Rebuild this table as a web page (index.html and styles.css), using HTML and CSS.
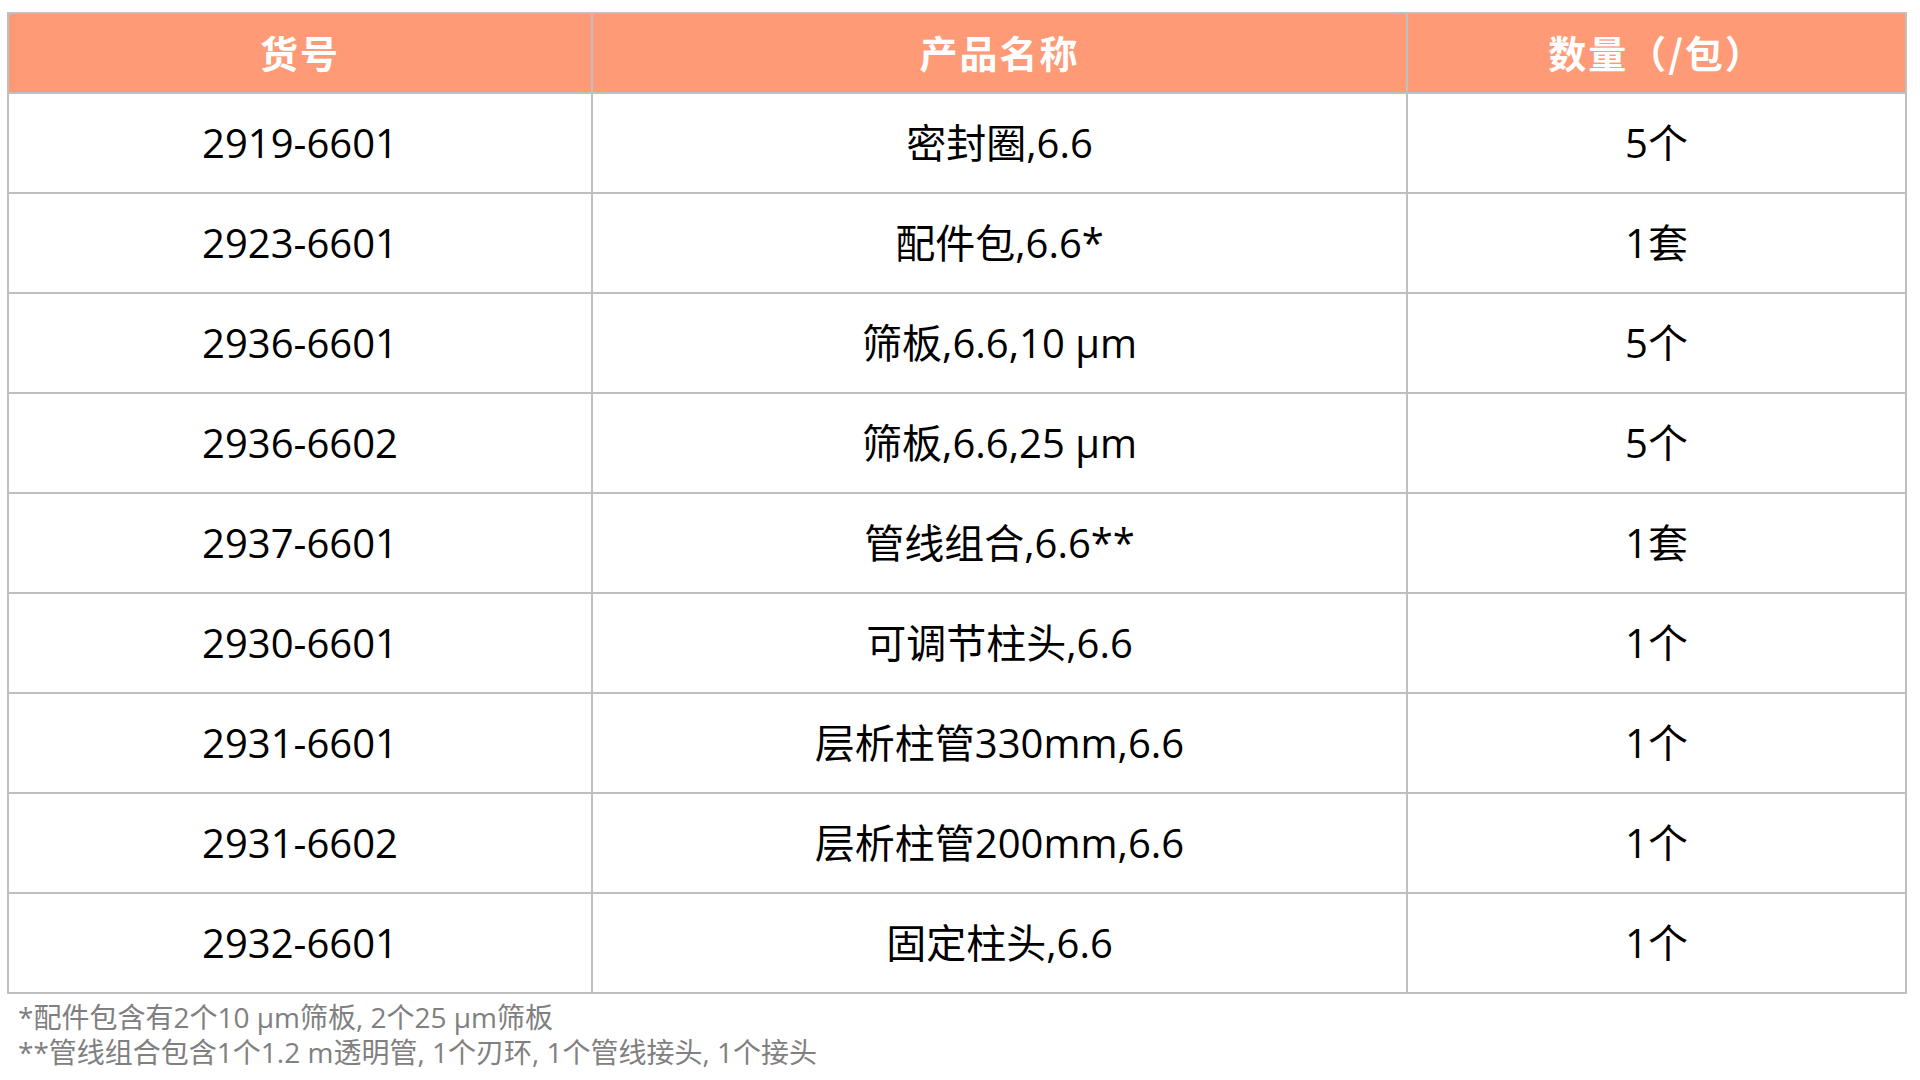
FILE: index.html
```html
<!DOCTYPE html>
<html lang="zh-CN">
<head>
<meta charset="utf-8">
<title>配件列表</title>
<link rel="stylesheet" href="styles.css">
</head>
<body>
<div class="page">
  <table class="parts">
    <colgroup>
      <col class="c1">
      <col class="c2">
      <col class="c3">
    </colgroup>
    <thead>
      <tr><th>货号</th><th>产品名称</th><th>数量（/包）</th></tr>
    </thead>
    <tbody>
      <tr><td>2919-6601</td><td>密封圈,6.6</td><td>5个</td></tr>
      <tr><td>2923-6601</td><td>配件包,6.6*</td><td>1套</td></tr>
      <tr><td>2936-6601</td><td>筛板,6.6,10 μm</td><td>5个</td></tr>
      <tr><td>2936-6602</td><td>筛板,6.6,25 μm</td><td>5个</td></tr>
      <tr><td>2937-6601</td><td>管线组合,6.6**</td><td>1套</td></tr>
      <tr><td>2930-6601</td><td>可调节柱头,6.6</td><td>1个</td></tr>
      <tr><td>2931-6601</td><td>层析柱管330mm,6.6</td><td>1个</td></tr>
      <tr><td>2931-6602</td><td>层析柱管200mm,6.6</td><td>1个</td></tr>
      <tr><td>2932-6601</td><td>固定柱头,6.6</td><td>1个</td></tr>
    </tbody>
  </table>
  <div class="notes">
    <p>*配件包含有2个10 μm筛板, 2个25 μm筛板</p>
    <p>**管线组合包含1个1.2 m透明管, 1个刃环, 1个管线接头, 1个接头</p>
  </div>
</div>
</body>
</html>
```

FILE: styles.css
```css
html, body {
  margin: 0;
  padding: 0;
  background: #ffffff;
}

body {
  font-family: "Open Sans", "Noto Sans CJK SC", sans-serif;
  color: #000000;
}

.page {
  padding: 12px 0 0 7px;
  width: 1900px;
}

.parts {
  width: 1898px;
  border-collapse: collapse;
  table-layout: fixed;
}

.c1 { width: 584px; }
.c2 { width: 815px; }
.c3 { width: 499px; }

.parts th,
.parts td {
  border: 2px solid #bfbfbf;
  text-align: center;
  vertical-align: middle;
  padding: 0;
}

.parts th {
  background: #fe9a76;
  color: #ffffff;
  font-family: "Noto Sans CJK SC", sans-serif;
  font-size: 38px;
  font-weight: 700;
  height: 74px;
  padding-bottom: 4px;
  letter-spacing: 2px;
}

.parts td {
  font-size: 40px;
  font-weight: 400;
  height: 98px;
  line-height: 54px;
}

.notes {
  padding: 6px 0 0 11px;
  color: #808080;
  font-size: 28px;
}

.notes p {
  margin: 0;
  line-height: 35px;
}
```
